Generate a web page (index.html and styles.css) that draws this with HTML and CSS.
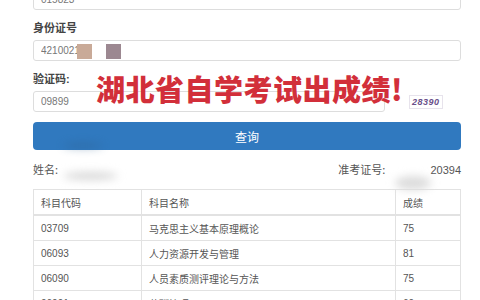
FILE: index.html
```html
<!DOCTYPE html>
<html lang="zh-CN">
  <head>
    <meta charset="UTF-8" />
    <meta name="viewport" content="width=device-width, initial-scale=1.0" />
    <title>成绩查询</title>
    <link rel="stylesheet" href="styles.css">
  </head>
  <body>
    <div class="page">
      <form class="formular">
        <input class="felt felt-top" type="text" value="015823" />
        <span class="etiket">身份证号</span>
        <div class="felt-wrap">
          <input class="felt" type="text" value="4210021" />
          <span class="mosaik mosaik-a"></span>
          <span class="mosaik mosaik-b"></span>
        </div>
        <span class="etiket">验证码:</span>
        <div class="kode-row">
          <input class="felt felt-kode" type="text" value="09899" />
          <span class="kode-billede">28390</span>
        </div>
        <button class="knap" type="button">查询</button>
        <h1 class="overskrift">湖北省自学考试出成绩!</h1>
      </form>

      <div class="info">
        <span>姓名:</span>
        <span>准考证号:<span class="nummer">20394</span></span>
      </div>

      <table class="karakterer">
        <thead>
          <tr><th class="c1">科目代码</th><th>科目名称</th><th class="c3">成绩</th></tr>
        </thead>
        <tbody>
          <tr><td>03709</td><td>马克思主义基本原理概论</td><td>75</td></tr>
          <tr><td>06093</td><td>人力资源开发与管理</td><td>81</td></tr>
          <tr><td>06090</td><td>人员素质测评理论与方法</td><td>75</td></tr>
          <tr><td>06091</td><td>薪酬管理</td><td>60</td></tr>
        </tbody>
      </table>

      <span class="smitte smitte-1"></span>
      <span class="smitte smitte-2"></span>
      <span class="smitte smitte-3"></span>
    </div>
  </body>
</html>
```

FILE: styles.css
```css
body {
  margin: 0;
  background: #fff;
  font-family: "Liberation Sans", "Noto Sans CJK SC", sans-serif;
  color: #333;
  overflow: hidden;
}

.page {
  position: relative;
  width: 428px;
  margin-left: 33px;
}

.formular {
  position: relative;
  display: flex;
  flex-direction: column;
}

.felt {
  box-sizing: border-box;
  width: 100%;
  height: 21px;
  padding: 0 7px;
  border: solid 1px #ddd;
  border-radius: 3px;
  font-family: "Liberation Sans", sans-serif;
  font-size: 10px;
  color: #777;
  outline: 0;
}

.felt-top {
  margin-top: -11px;
}

.etiket {
  margin: 12px 0 5px;
  font-size: 11px;
  font-weight: bold;
  color: #444;
  line-height: 13px;
}

.felt-wrap {
  position: relative;
}

.mosaik {
  position: absolute;
  top: 4px;
  width: 15px;
  height: 15px;
}
.mosaik-a {
  left: 44px;
  background: #c9aa98;
}
.mosaik-b {
  left: 73px;
  background: #9c8891;
}

.kode-row {
  display: flex;
  align-items: center;
  gap: 24px;
}

.felt-kode {
  width: 352px;
}

.kode-billede {
  font-family: "Liberation Sans", sans-serif;
  font-size: 9px;
  font-style: italic;
  font-weight: bold;
  color: #6a4f8a;
  letter-spacing: 0.5px;
  padding: 1px 2px;
  border: solid 1px #e7e3ec;
}

.knap {
  margin-top: 10px;
  height: 28px;
  border: none;
  border-radius: 4px;
  background-color: #3079bf;
  color: #fff;
  font-family: "Noto Sans CJK SC", sans-serif;
  font-size: 12px;
}

.overskrift {
  position: absolute;
  left: 63px;
  top: 70px;
  margin: 0;
  font-family: "Noto Sans CJK SC", serif;
  font-size: 29px;
  font-weight: 900;
  color: #d22f3a;
  letter-spacing: 0.5px;
  line-height: 36px;
}

.info {
  display: flex;
  justify-content: space-between;
  margin-top: 11px;
  font-family: "Noto Sans CJK SC", sans-serif;
  font-size: 11px;
  color: #555;
  line-height: 16px;
}

.nummer {
  margin-left: 45px;
  font-family: "Liberation Sans", sans-serif;
  font-size: 11px;
}

.karakterer {
  width: 100%;
  margin-top: 11px;
  border-collapse: collapse;
  font-size: 10px;
  color: #555;
}

.karakterer th,
.karakterer td {
  height: 24px;
  padding: 0 7px;
  border: solid 1px #e2e2e2;
  text-align: left;
  font-weight: normal;
  font-family: "Liberation Sans", "Noto Sans CJK SC", sans-serif;
}

.karakterer th {
  height: 24px;
  border-bottom: solid 2px #e2e2e2;
}

.c1 {
  width: 93px;
}
.c3 {
  width: 50px;
}

.smitte {
  position: absolute;
  border-radius: 50%;
  filter: blur(4px);
}
.smitte-1 {
  left: 30px;
  top: 172px;
  width: 55px;
  height: 8px;
  background: #d8d8d8;
}
.smitte-2 {
  left: 362px;
  top: 176px;
  width: 36px;
  height: 14px;
  background: #dcdcdc;
}
.smitte-3 {
  left: 30px;
  top: 143px;
  width: 40px;
  height: 5px;
  background: #2d5f8e;
  opacity: 0.5;
}
```
